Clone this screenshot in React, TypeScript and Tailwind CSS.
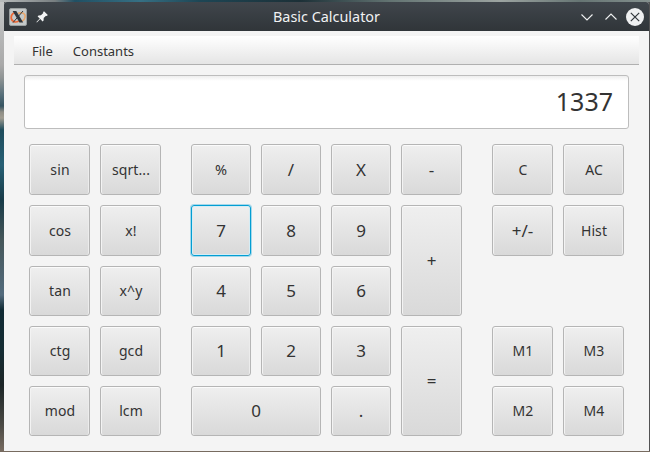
import React from "react";

type Key = { label: string; place: string; text?: string; focused?: boolean };

const small = "text-[14px] tracking-[0.1px] pl-px";
const large = "text-[17px]";
const raised = "text-[17px] pb-[2px]";

const keys: Key[] = [
  { label: "sin", place: "col-start-1 row-start-1" },
  { label: "sqrt...", place: "col-start-2 row-start-1" },
  { label: "%", place: "col-start-4 row-start-1", text: "text-[14.5px]" },
  { label: "/", place: "col-start-5 row-start-1", text: large },
  { label: "X", place: "col-start-6 row-start-1", text: large },
  { label: "-", place: "col-start-7 row-start-1", text: large },
  { label: "C", place: "col-start-9 row-start-1" },
  { label: "AC", place: "col-start-10 row-start-1" },
  { label: "cos", place: "col-start-1 row-start-2" },
  { label: "x!", place: "col-start-2 row-start-2" },
  { label: "7", place: "col-start-4 row-start-2", text: large, focused: true },
  { label: "8", place: "col-start-5 row-start-2", text: large },
  { label: "9", place: "col-start-6 row-start-2", text: large },
  { label: "+", place: "col-start-7 row-start-2 row-span-2", text: large },
  { label: "+/-", place: "col-start-9 row-start-2", text: large },
  { label: "Hist", place: "col-start-10 row-start-2" },
  { label: "tan", place: "col-start-1 row-start-3" },
  { label: "x^y", place: "col-start-2 row-start-3" },
  { label: "4", place: "col-start-4 row-start-3", text: raised },
  { label: "5", place: "col-start-5 row-start-3", text: raised },
  { label: "6", place: "col-start-6 row-start-3", text: raised },
  { label: "ctg", place: "col-start-1 row-start-4" },
  { label: "gcd", place: "col-start-2 row-start-4" },
  { label: "1", place: "col-start-4 row-start-4", text: raised },
  { label: "2", place: "col-start-5 row-start-4", text: raised },
  { label: "3", place: "col-start-6 row-start-4", text: raised },
  { label: "=", place: "col-start-7 row-start-4 row-span-2", text: raised },
  { label: "M1", place: "col-start-9 row-start-4" },
  { label: "M3", place: "col-start-10 row-start-4" },
  { label: "mod", place: "col-start-1 row-start-5" },
  { label: "lcm", place: "col-start-2 row-start-5" },
  { label: "0", place: "col-start-4 row-start-5 col-span-2", text: raised },
  { label: ".", place: "col-start-6 row-start-5", text: raised },
  { label: "M2", place: "col-start-9 row-start-5" },
  { label: "M4", place: "col-start-10 row-start-5" },
];

function CalcKey({ label, place, text = small, focused }: Key) {
  const edge = focused
    ? "border-[#039ed3] shadow-[0_0_0_1px_#a5d8ea,inset_0_0_0_1px_#d5edf5]"
    : "border-[#b5b5b5] shadow-[inset_0_1px_0_#fbfbfb,inset_1px_0_0_#f3f3f3,inset_-1px_0_0_#ececec]";
  return (
    <button
      className={`${place} ${text} ${edge} flex items-center justify-center rounded-[3px] border bg-linear-to-b from-[#efefef] to-[#d9d9d9] leading-none text-[#333333]`}
    >
      {label}
    </button>
  );
}

function AppIcon() {
  return (
    <svg className="h-[18px] w-[18px]" viewBox="0 0 18 18" fill="none">
      <rect x="0.5" y="0.5" width="17" height="17" rx="1.5" fill="#c5c9c9" stroke="#9a9fa0" />
      <path d="M5.5 4.8C1.4 6.3 1 12 4.8 13.6c1.8.8 3.6.2 4.9-.6" stroke="#ee6734" strokeWidth="1.7" />
      <path d="M9 5.2c4.4-1.6 7.9.6 7 4.2-.6 2.7-3.3 4.3-6.1 4" stroke="#eba568" strokeWidth="1.5" />
      <path d="M3.6 3h3.7l6.9 11.6h-3.7z" fill="#30363c" />
      <path d="M14 3 4 14.6" stroke="#30363c" strokeWidth="1" />
    </svg>
  );
}

function Pin() {
  return (
    <svg className="h-3 w-3" viewBox="0 0 12 12">
      <path d="M8 .2 11.8 3.9 10.8 5 10 4.7 7.7 7.1 7.6 9.5 6.6 10.4 4.3 8.1.9 11.5.4 11 3.8 7.6 1.6 5.4 2.5 4.4 4.9 4.3 7.3 2 7 1.2z" fill="#f3f4f5" />
    </svg>
  );
}

export default function App() {
  return (
    <div className="h-[452px] w-[650px] overflow-hidden bg-[linear-gradient(180deg,#c6c8c8_0px,#a9a9a9_65px,#8f9494_78px,#566e79_95px,#365461_106px,#8e8d85_112px,#a09c91_118px,#1e4c5c_130px,#276075_165px,#183b48_200px,#46575a_240px,#536b7d_295px,#102a34_310px,#152d34_350px,#1c2527_385px,#4b4a45_425px,#776b60_451px)] font-['Noto_Sans',sans-serif]">
      <div className="h-0.5 bg-[linear-gradient(90deg,#b9bcbc_0px,#777e80_55px,#205064_75px,#367084_140px,#1d4655_200px,#1c3037_300px,#637472_390px,#9ca4a1_500px,#667573_580px,#84908e_650px)]" />
      <div className="ml-1 flex h-[449px] bg-[#525253]">
        <main className="flex w-[645px] flex-col rounded-t-[3px] bg-[#f4f4f4]">
          <header className="flex h-[29px] items-center rounded-t-[3px] bg-linear-to-b from-[#40464c] to-[#303539] px-[5px] text-[#f1f2f3]">
            <div className="flex w-[84px] items-center gap-[9px]">
              <AppIcon />
              <Pin />
            </div>
            <h1 className="flex-1 pt-px text-center text-[14.4px] leading-none">Basic Calculator</h1>
            <div className="flex w-[84px] items-center justify-end">
              <svg className="-mr-px h-[18px] w-[66px]" viewBox="0 0 66 18" fill="none">
                <path d="m2.5 6.5 5.5 5.5 5.5-5.5M26.5 11.5 32 6l5.5 5.5" stroke="#eff0f1" strokeWidth="1.1" />
                <circle cx="56" cy="9" r="9" fill="#eff0f1" />
                <path d="m51.8 4.8 8.4 8.4m0-8.4-8.4 8.4" stroke="#31363b" strokeWidth="1.2" />
              </svg>
            </div>
          </header>
          <nav className="mx-[10px] mt-[5px] flex h-[29px] items-center gap-5 border-b border-[#b0b0b0] bg-linear-to-b from-white to-[#e5e5e5] pl-[18px] pt-[3px] text-[13px] leading-none text-[#333333]">
            <span>File</span>
            <span>Constants</span>
          </nav>
          <div className="mx-5 mt-[10px] flex h-[54px] items-center justify-end rounded-[3px] border border-[#bdbdbd] bg-white bg-linear-to-b from-[#eeeeee] via-white via-[5px] to-white pb-[2px] pr-[15px] text-[25px] leading-none text-[#333333]">
            1337
          </div>
          <section className="ml-[25px] mt-[15px] grid grid-cols-[61px_61px_10px_60px_60px_60px_61px_10px_61px_61px] grid-rows-[51px_51px_50px_50px_50px] gap-[10px]">
            {keys.map((key) => (
              <CalcKey key={key.label} {...key} />
            ))}
          </section>
        </main>
      </div>
    </div>
  );
}
